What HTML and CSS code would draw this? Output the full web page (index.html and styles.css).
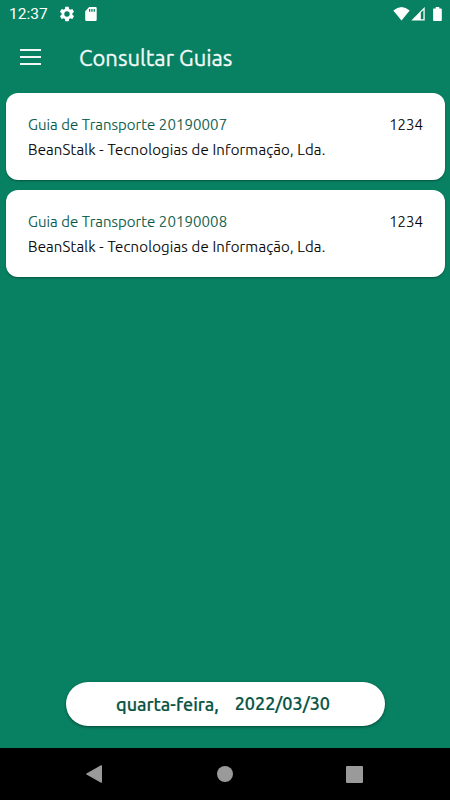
FILE: index.html
```
<!DOCTYPE html>
<html lang="pt">
<head>
    <meta charset="UTF-8">
    <meta name="viewport" content="width=device-width, initial-scale=1.0">
    <title>Consultar Guias</title>
    <link rel="stylesheet" href="styles.css">
</head>
<body>

<div class="status-bar">
    <span class="clock">12:37</span>
    <svg class="gear" width="18" height="18" viewBox="0 0 24 24"><path fill="#fff" d="M19.14 12.94c.04-.3.06-.61.06-.94 0-.32-.02-.64-.07-.94l2.03-1.58a.49.49 0 0 0 .12-.61l-1.92-3.32a.49.49 0 0 0-.59-.22l-2.39.96c-.5-.38-1.03-.7-1.62-.94l-.36-2.54a.48.48 0 0 0-.48-.41h-3.84a.47.47 0 0 0-.47.41l-.36 2.54c-.59.24-1.13.57-1.62.94l-2.39-.96a.48.48 0 0 0-.59.22L2.74 8.87a.47.47 0 0 0 .12.61l2.03 1.58c-.05.3-.09.63-.09.94s.02.64.07.94l-2.03 1.58a.49.49 0 0 0-.12.61l1.92 3.32c.12.22.37.29.59.22l2.39-.96c.5.38 1.03.7 1.62.94l.36 2.54c.05.24.24.41.48.41h3.84c.24 0 .44-.17.47-.41l.36-2.54c.59-.24 1.13-.56 1.62-.94l2.39.96c.22.08.47 0 .59-.22l1.92-3.32a.47.47 0 0 0-.12-.61l-2.01-1.58zM12 15.6A3.6 3.6 0 1 1 12 8.4a3.6 3.6 0 0 1 0 7.2z"/></svg>
    <svg class="sd-card" width="12" height="14" viewBox="0 0 12 14"><path fill="#fff" fill-rule="evenodd" d="M4.2 0h6.4q1.1 0 1.1 1.1v11.6q0 1.3-1.3 1.3H1.5Q.2 14 .2 12.700V4.200zM4 2v2.700h1.300V2zM6.300 2v2.700h1.300V2zM8.600 2v2.700h1.300V2z"/></svg>
    <div class="signals">
        <svg width="17" height="14" viewBox="0 0 17 14"><path fill="#fff" d="M8.500 13.600.3 3.600Q8.500-3.400 16.700 3.600z"/></svg>
        <svg class="mobile" width="14" height="14" viewBox="0 0 14 14"><path fill="#fff" fill-rule="evenodd" d="M13.700 0v13.500H.3zM9.800 5.500v6.800h2.600V3z"/></svg>
        <svg class="battery" width="9" height="14" viewBox="0 0 9 14"><path fill="#fff" d="M2.700 0h3.600v1.400h1.700q.8 0 .8.800v11q0 .8-.8.800H.9q-.8 0-.8-.8v-11q0-.8.800-.8h1.800z"/></svg>
    </div>
</div>

<header>
    <div class="menu-icon">
        <span></span>
        <span></span>
        <span></span>
    </div>
    <h1>Consultar Guias</h1>
</header>

<main>
    <div class="card">
        <div class="card-row">
            <span class="guide">Guia de Transporte 20190007</span>
            <span class="number">1234</span>
        </div>
        <div class="company">BeanStalk - Tecnologias de Informação, Lda.</div>
    </div>
    <div class="card">
        <div class="card-row">
            <span class="guide">Guia de Transporte 20190008</span>
            <span class="number">1234</span>
        </div>
        <div class="company">BeanStalk - Tecnologias de Informação, Lda.</div>
    </div>
</main>

<div class="date-button">
    <span class="weekday">quarta-feira,</span>
    <span class="date">2022/03/30</span>
</div>

<div class="nav-bar">
    <svg width="16" height="18" viewBox="0 0 16 18"><path fill="#9a9a9a" d="M15 .3q1-.5 1 .6v16.200q0 1.100-1 .6L.5 9.600Q-.3 9 .5 8.400z"/></svg>
    <span class="home"></span>
    <span class="recent"></span>
</div>

</body>
</html>
```

FILE: styles.css
```
body {
    font-family: Ubuntu, "Noto Sans", sans-serif;
    margin: 0;
    height: 800px;
    display: flex;
    flex-direction: column;
    background-color: #088162;
    overflow: hidden;
}

svg {
    display: block;
}

.status-bar {
    height: 27px;
    display: flex;
    align-items: center;
    padding: 0 8px 0 9px;
    color: white;
}

.clock {
    width: 49px;
    padding-top: 2px;
    font-family: Roboto, sans-serif;
    font-size: 15.5px;
    line-height: 27px;
    white-space: nowrap;
}

.sd-card {
    margin-left: 9px;
}

.signals {
    display: flex;
    margin-left: auto;
}

.mobile {
    margin-left: 1px;
}

.battery {
    margin-left: 8px;
}

header {
    height: 61px;
    display: flex;
    align-items: center;
    padding-left: 20px;
    color: #f4faf8;
}

.menu-icon {
    width: 21px;
    height: 16px;
    display: flex;
    flex-direction: column;
    justify-content: space-between;
    margin-right: 38px;
    margin-bottom: 2px;
}

.menu-icon span {
    height: 2px;
    background-color: #f0f7f5;
}

h1 {
    margin: 0;
    font-size: 22px;
    font-weight: 400;
    line-height: 30px;
    -webkit-text-stroke: 0.3px #f4faf8;
}

main {
    flex: 1;
    padding: 5px 5px 0 6px;
}

.card {
    box-sizing: border-box;
    height: 87px;
    margin-bottom: 10px;
    padding: 19px 22px;
    background-color: white;
    border-radius: 12px;
    box-shadow: 0 1px 2px rgba(0, 0, 0, 0.35);
    font-size: 15px;
    font-weight: 300;
    line-height: 25px;
    color: #000;
    white-space: nowrap;
    -webkit-text-stroke: 0.15px;
}

.card-row {
    display: flex;
    justify-content: space-between;
}

.guide {
    color: #005542;
    letter-spacing: 0.08px;
}

.company {
    letter-spacing: 0.19px;
}

.date-button {
    box-sizing: border-box;
    width: 319px;
    height: 44px;
    margin: 0 auto 22px;
    padding: 0 4px 1px 0;
    display: flex;
    align-items: center;
    justify-content: center;
    gap: 16px;
    background-color: white;
    border-radius: 22px;
    box-shadow: 0 1px 3px rgba(0, 0, 0, 0.45);
    color: #075443;
    font-size: 18px;
    font-weight: 500;
    white-space: nowrap;
    -webkit-text-stroke: 0.2px;
}

.date {
    padding-bottom: 2px;
}

.nav-bar {
    height: 52px;
    display: flex;
    align-items: center;
    justify-content: space-between;
    padding: 0 87px 0 86px;
    background-color: black;
}

.home {
    width: 16px;
    height: 16px;
    margin-left: 1px;
    border-radius: 50%;
    background-color: #9a9a9a;
}

.recent {
    width: 17px;
    height: 17px;
    border-radius: 1px;
    background-color: #9a9a9a;
}
```
